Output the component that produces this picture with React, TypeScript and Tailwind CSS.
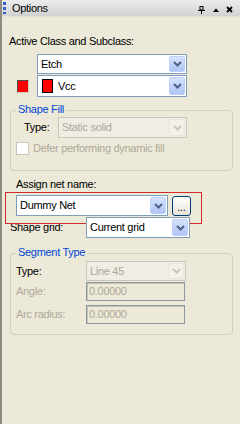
import React from "react";

const Chevron = ({ color }: { color: string }) => (
  <svg width="9" height="6" viewBox="0 0 9 6">
    <polyline points="1,1 4.5,4.5 8,1" fill="none" stroke={color} strokeWidth="2" />
  </svg>
);

const Combo = ({
  text,
  disabled,
  swatch,
  className,
}: {
  text: string;
  disabled?: boolean;
  swatch?: boolean;
  className?: string;
}) => (
  <div
    className={
      "flex items-stretch border " +
      (disabled ? "border-[#c9c7ba] bg-[#efede4] text-[#aca899] " : "border-[#7f9db9] bg-white text-black ") +
      (className || "")
    }
  >
    <div className="flex-1 flex items-center pl-[3px] overflow-hidden whitespace-nowrap">
      {swatch && <span className="w-[11px] h-[14px] bg-[#ff0000] border border-black mr-[5px] ml-[1px]" />}
      {text}
    </div>
    <div
      className={
        "w-[16px] my-[1px] mr-[1px] rounded-[2px] border flex items-center justify-center " +
        (disabled
          ? "border-[#e8e6dc] bg-[#f3f1e8]"
          : "border-[#bdd0f8] bg-gradient-to-b from-[#d6e2fe] to-[#b0c5f6]")
      }
    >
      <Chevron color={disabled ? "#c9c7ba" : "#4d6185"} />
    </div>
  </div>
);

const Field = ({ value }: { value: string }) => (
  <div className="w-[99px] h-[19px] border border-[#8c98a3] shadow-[inset_1px_1px_0_#c4c2b6] bg-[#ece9d8] text-[#aca899] pl-[2px] flex items-center">
    {value}
  </div>
);

const Group = ({ title, className, children }: { title: string; className: string; children: React.ReactNode }) => (
  <div className={"relative ml-[8px] w-[223px] border border-[#d0d0bf] rounded-[4px] " + className}>
    <span className="absolute -top-[8px] left-[5px] px-[2px] bg-[#ece9d8] text-[#0046d5]">{title}</span>
    {children}
  </div>
);

export default function App() {
  return (
    <div className="relative w-[240px] h-[424px] bg-[#ece9d8] border-l-2 border-[#8e8c80] text-[11px] leading-[13px] tracking-[-0.3px] text-black font-['Liberation_Sans',Arial,sans-serif]">
      {/* title bar */}
      <div className="h-[17px] flex items-center bg-gradient-to-b from-[#ececec] to-[#d2d2d2] border-b border-[#e4e2d6]">
        <div className="ml-[1px] w-[3px] flex flex-col gap-[2px]">
          <span className="h-[3px] bg-[#3a5fcd]" />
          <span className="h-[3px] bg-[#3a5fcd]" />
          <span className="h-[2px] bg-[#3a5fcd]" />
        </div>
        <span className="ml-[6px] text-black">Options</span>
        <div className="ml-auto flex items-center mr-[7px] mt-[3px]">
          <svg width="7" height="8" viewBox="0 0 7 8">
            <rect x="2" y="0.5" width="3" height="3.5" fill="none" stroke="#000" strokeWidth="1" />
            <line x1="0" y1="4.5" x2="7" y2="4.5" stroke="#000" strokeWidth="1" />
            <line x1="3.5" y1="4.5" x2="3.5" y2="8" stroke="#000" strokeWidth="1" />
          </svg>
          <svg className="ml-[8px]" width="6" height="4" viewBox="0 0 6 4">
            <polygon points="0,4 3,0.5 6,4" fill="#000" />
          </svg>
          <svg className="ml-[7px]" width="7" height="7" viewBox="0 0 7 7">
            <path d="M1 1 L6 6 M6 1 L1 6" stroke="#000" strokeWidth="1.8" />
          </svg>
        </div>
      </div>

      <p className="ml-[7px] mt-[18px]">Active Class and Subclass:</p>
      <Combo className="ml-[35px] mt-[6px] w-[150px] h-[20px]" text="Etch" />
      <div className="flex items-center mt-[1px] h-[22px]">
        <span className="ml-[15px] w-[12px] h-[13px] bg-[#ff0000] border border-t-[#505050] border-l-[#505050] border-b-[#d4d0c8] border-r-[#d4d0c8]" />
        <Combo className="ml-[8px] w-[150px] h-[22px]" text="Vcc" swatch />
      </div>

      <Group title="Shape Fill" className="mt-[13px] h-[61px]">
        <div className="flex items-center mt-[6px]">
          <span className="ml-[13px] w-[34px]">Type:</span>
          <Combo className="w-[129px] h-[21px]" text="Static solid" disabled />
        </div>
        <div className="flex items-center mt-[4px] text-[#aca899]">
          <span className="ml-[5px] w-[13px] h-[13px] border border-[#c9c7ba] bg-white" />
          <span className="ml-[4px]">Defer performing dynamic fill</span>
        </div>
      </Group>

      <p className="ml-[14px] mt-[7px]">Assign net name:</p>
      <div className="flex items-center mt-[4px] h-[21px]">
        <Combo className="ml-[14px] w-[152px] h-[21px]" text="Dummy Net" />
        <div className="ml-[4px] w-[19px] h-[20px] rounded-[3px] border border-[#003c74] bg-gradient-to-b from-white to-[#e6e3d6] flex items-end justify-center pb-[4px] leading-[8px]">
          ...
        </div>
      </div>
      <div className="flex items-center mt-[1px] h-[21px]">
        <span className="ml-[8px] w-[76px]">Shape grid:</span>
        <Combo className="relative z-10 w-[104px] h-[21px]" text="Current grid" />
      </div>

      <Group title="Segment Type" className="mt-[15px] h-[82px]">
        <div className="flex items-center mt-[7px]">
          <span className="ml-[5px] w-[70px]">Type:</span>
          <Combo className="w-[100px] h-[20px]" text="Line 45" disabled />
        </div>
        <div className="flex items-center mt-[1px] text-[#aca899]">
          <span className="ml-[5px] w-[70px]">Angle:</span>
          <Field value="0.00000" />
        </div>
        <div className="flex items-center mt-[4px] text-[#aca899]">
          <span className="ml-[5px] w-[70px]">Arc radius:</span>
          <Field value="0.00000" />
        </div>
      </Group>

      {/* red highlight around the net name row */}
      <div className="absolute left-[3px] top-[192px] w-[197px] h-[32px] border border-[#d12a2a]" />
    </div>
  );
}
